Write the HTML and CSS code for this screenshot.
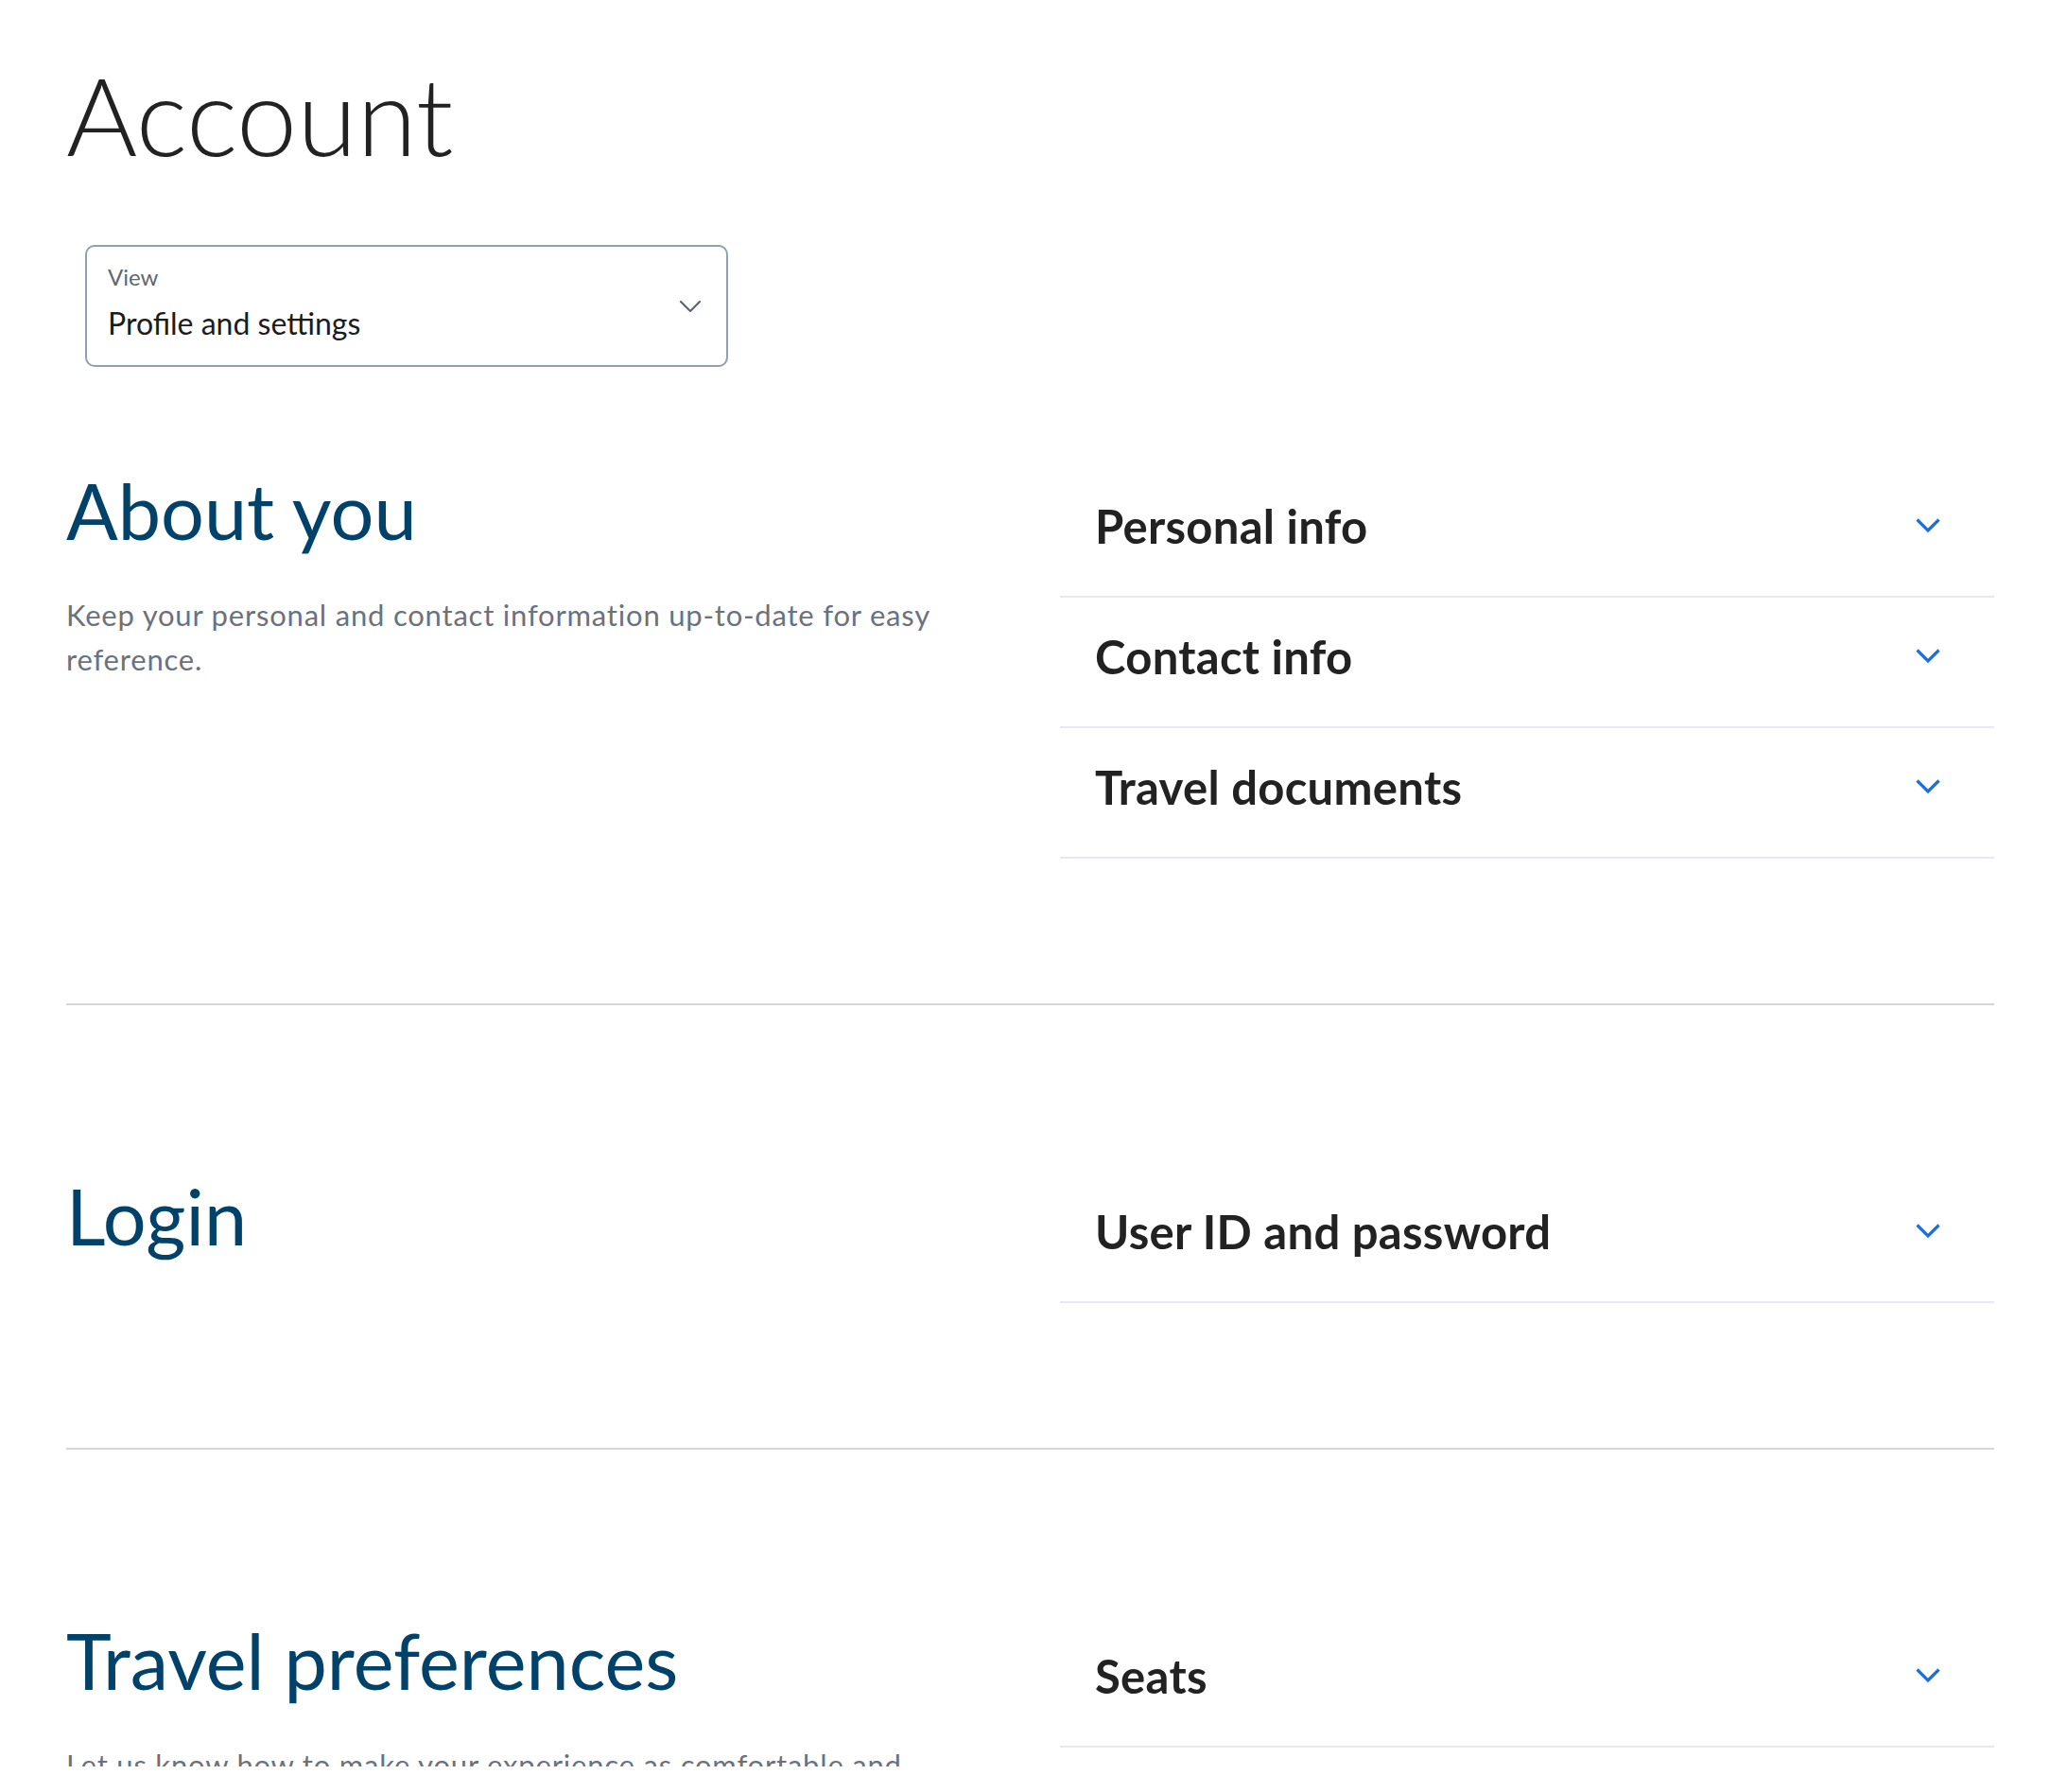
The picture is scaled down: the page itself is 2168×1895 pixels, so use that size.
FILE: index.html
```html
<!DOCTYPE html>
<html lang="en">
<head>
<meta charset="utf-8">
<title>Account</title>
<link rel="stylesheet" href="styles.css">
</head>
<body>
<div class="page">
  <h1 class="title">Account</h1>
  <div class="select">
    <div class="select-text">
      <span class="select-label">View</span>
      <span class="select-value">Profile and settings</span>
    </div>
    <svg class="select-chevron" width="24" height="14" viewBox="0 0 24 14"><polyline points="2,2 12,12 22,2" fill="none" stroke="#5a6577" stroke-width="2.2" stroke-linecap="round" stroke-linejoin="round"/></svg>
  </div>

  <section class="section first">
    <div class="intro">
      <h2 class="section-title">About you</h2>
      <p class="section-desc">Keep your personal and contact information up-to-date for easy reference.</p>
    </div>
    <div class="rows">
      <div class="row"><span class="row-label">Personal info</span><svg class="row-chevron" width="28" height="18" viewBox="0 0 28 18"><polyline points="2.5,2.5 14,14 25.5,2.5" fill="none" stroke="#1a6fe0" stroke-width="3.2" stroke-linejoin="miter"/></svg></div>
      <div class="row"><span class="row-label">Contact info</span><svg class="row-chevron" width="28" height="18" viewBox="0 0 28 18"><polyline points="2.5,2.5 14,14 25.5,2.5" fill="none" stroke="#1a6fe0" stroke-width="3.2" stroke-linejoin="miter"/></svg></div>
      <div class="row"><span class="row-label">Travel documents</span><svg class="row-chevron" width="28" height="18" viewBox="0 0 28 18"><polyline points="2.5,2.5 14,14 25.5,2.5" fill="none" stroke="#1a6fe0" stroke-width="3.2" stroke-linejoin="miter"/></svg></div>
    </div>
  </section>

  <section class="section">
    <div class="intro">
      <h2 class="section-title">Login</h2>
    </div>
    <div class="rows">
      <div class="row"><span class="row-label">User ID and password</span><svg class="row-chevron" width="28" height="18" viewBox="0 0 28 18"><polyline points="2.5,2.5 14,14 25.5,2.5" fill="none" stroke="#1a6fe0" stroke-width="3.2" stroke-linejoin="miter"/></svg></div>
    </div>
  </section>

  <section class="section last">
    <div class="intro">
      <h2 class="section-title">Travel preferences</h2>
      <p class="section-desc">Let us know how to make your experience as comfortable and enjoyable as possible.</p>
    </div>
    <div class="rows">
      <div class="row"><span class="row-label">Seats</span><svg class="row-chevron" width="28" height="18" viewBox="0 0 28 18"><polyline points="2.5,2.5 14,14 25.5,2.5" fill="none" stroke="#1a6fe0" stroke-width="3.2" stroke-linejoin="miter"/></svg></div>
      <div class="row"><span class="row-label">Meals</span><svg class="row-chevron" width="28" height="18" viewBox="0 0 28 18"><polyline points="2.5,2.5 14,14 25.5,2.5" fill="none" stroke="#1a6fe0" stroke-width="3.2" stroke-linejoin="miter"/></svg></div>
    </div>
  </section>
</div>
</body>
</html>
```

FILE: styles.css
```css
* { box-sizing: border-box; }

html, body {
  margin: 0;
  padding: 0;
  background: #ffffff;
}

body {
  font-family: "Lato", "Noto Sans", sans-serif;
  color: #222222;
}

.page {
  height: 1868px;
  overflow: hidden;
  padding: 0 59px 0 70px;
}

.title {
  margin: 0;
  padding-top: 63px;
  font-size: 115px;
  font-weight: 300;
  line-height: 1;
  color: #222222;
}

.select {
  margin: 81px 0 0 20px;
  width: 680px;
  height: 129px;
  border: 2px solid #8fa0b3;
  border-radius: 10px;
  display: flex;
  align-items: center;
  justify-content: space-between;
  padding: 0 26px 0 22px;
}

.select-text {
  display: flex;
  flex-direction: column;
  gap: 21px;
  padding-bottom: 8px;
}

.select-label {
  font-size: 24px;
  line-height: 1;
  color: #5f6775;
}

.select-value {
  font-size: 32px;
  line-height: 1;
  color: #1c1c1c;
}

.section {
  display: grid;
  grid-template-columns: 1fr 988px;
  padding: 177px 0 153px 0;
  border-bottom: 2px solid #d6d6d6;
}

.section.first { padding-top: 106px; }
.section.last { border-bottom: none; }

.section-title {
  margin: 5px 0 0 0;
  font-size: 81px;
  font-weight: 400;
  line-height: 1;
  color: #01426a;
}

.section-desc {
  margin: 47px 0 0 0;
  max-width: 960px;
  font-size: 31px;
  letter-spacing: 0.8px;
  line-height: 47px;
  color: #6b717d;
}

.rows {
  display: flex;
  flex-direction: column;
}

.row {
  height: 138px;
  display: flex;
  align-items: center;
  justify-content: space-between;
  padding: 0 56px 12px 37px;
  border-bottom: 2px solid #e8e7f3;
}

.row-label {
  font-size: 49px;
  font-weight: 700;
  letter-spacing: 0.3px;
  line-height: 1;
  color: #222222;
}

.row-chevron {
  display: block;
}
```
